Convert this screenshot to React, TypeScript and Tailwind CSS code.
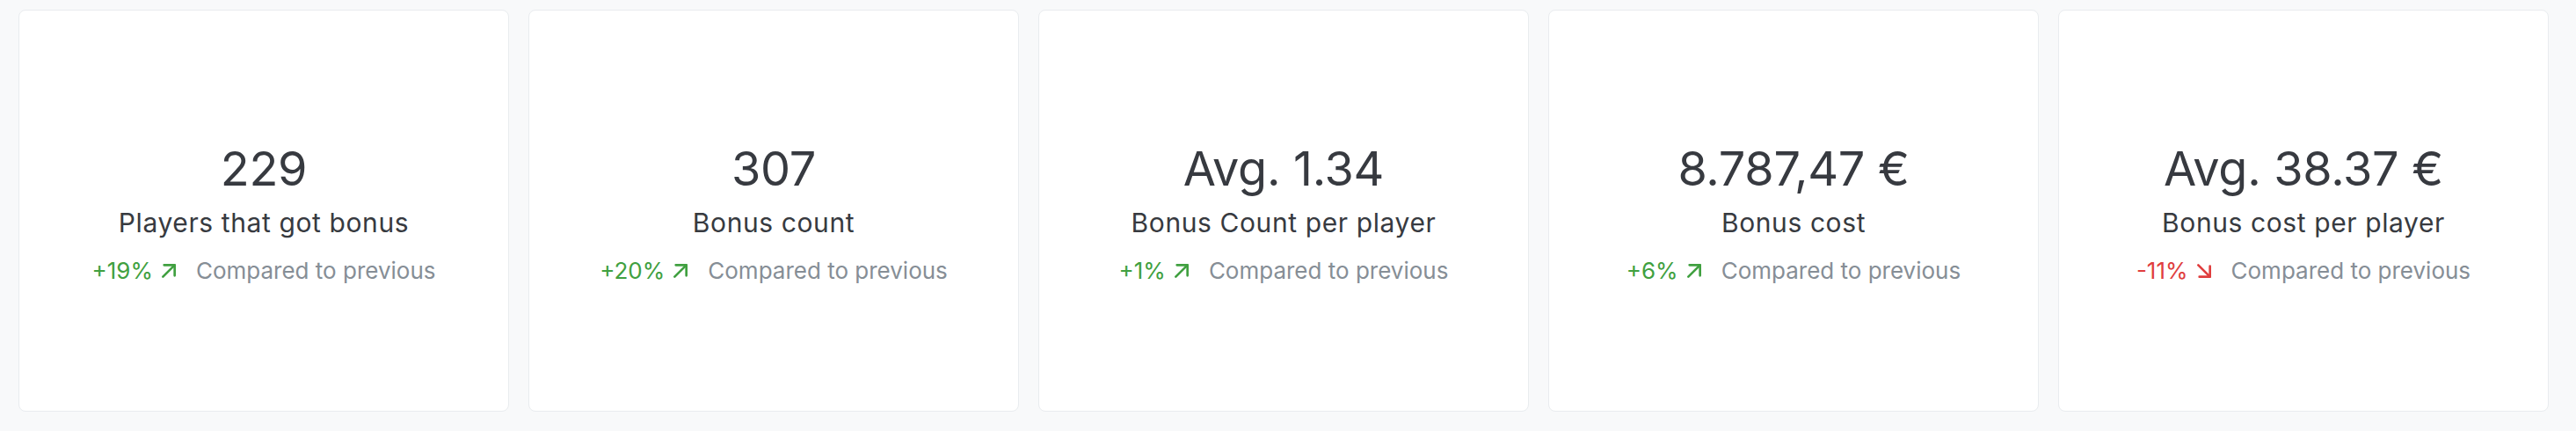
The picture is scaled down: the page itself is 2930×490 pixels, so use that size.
import React from "react";

type Stat = { value: string; title: string; diff: number };

const stats: Stat[] = [
  { value: "229", title: "Players that got bonus", diff: 19 },
  { value: "307", title: "Bonus count", diff: 20 },
  { value: "Avg. 1.34", title: "Bonus Count per player", diff: 1 },
  { value: "8.787,47 €", title: "Bonus cost", diff: 6 },
  { value: "Avg. 38.37 €", title: "Bonus cost per player", diff: -11 },
];

function ArrowUpRight() {
  return (
    <svg width="32" height="32" viewBox="0 0 24 24" fill="none" stroke="currentColor" strokeWidth="2" strokeLinecap="round" strokeLinejoin="round">
      <path d="M17 7l-10 10" />
      <path d="M8 7l9 0l0 9" />
    </svg>
  );
}

function ArrowDownRight() {
  return (
    <svg width="32" height="32" viewBox="0 0 24 24" fill="none" stroke="currentColor" strokeWidth="2" strokeLinecap="round" strokeLinejoin="round">
      <path d="M7 7l10 10" />
      <path d="M17 8l0 9l-9 0" />
    </svg>
  );
}

function Card({ s }: { s: Stat }) {
  const up = s.diff > 0;
  return (
    <div className="h-[457px] rounded-[8px] border border-[#e9ecef] bg-white flex flex-col items-center justify-center pt-[7px]">
      <div className="text-[54px] leading-[60px] tracking-[-0.3px] text-[#373a40]">{s.value}</div>
      <div className="mt-[13px] text-[30px] leading-[36px] tracking-[0.6px] text-[#373a40]">{s.title}</div>
      <div className="mt-[21px] flex items-center text-[26px] leading-[32px]">
        <span className={`flex items-center gap-[2px] ${up ? "text-[#40a040]" : "text-[#e03e3e]"}`}>
          <span>{up ? "+" : ""}{s.diff}%</span>
          {up ? <ArrowUpRight /> : <ArrowDownRight />}
        </span>
        <span className="ml-[15px] text-[#868e96]">Compared to previous</span>
      </div>
    </div>
  );
}

export default function App() {
  return (
    <div
      className="w-[2930px] h-[490px] bg-[#f8f9fa] pl-[21px] pt-[11px]"
      style={{ fontFamily: "Inter, 'Noto Sans', sans-serif" }}
    >
      <div className="w-[2878px] grid grid-cols-5 gap-[22px]">
        {stats.map((s) => (
          <Card key={s.title} s={s} />
        ))}
      </div>
    </div>
  );
}
